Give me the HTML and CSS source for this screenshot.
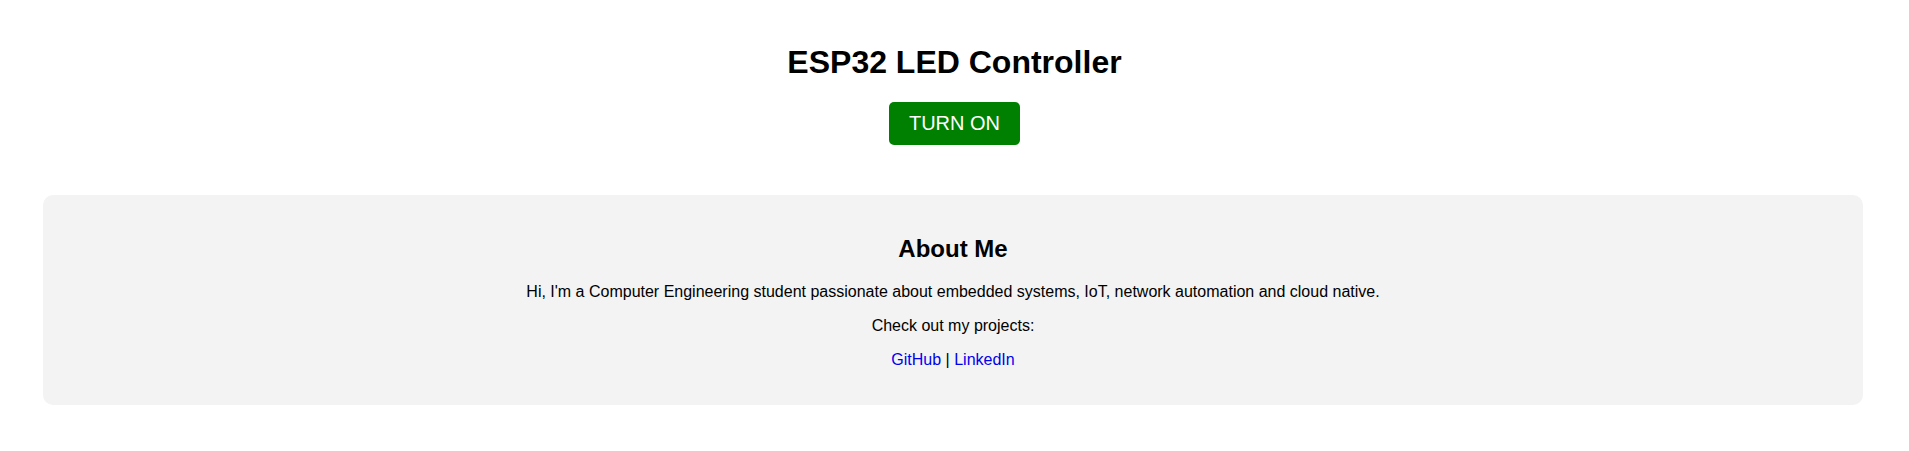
FILE: index.html
```html
<!DOCTYPE html>
<html lang="en">
<head>
<meta charset="utf-8">
<title>ESP32 LED Controller</title>
<link rel="stylesheet" href="styles.css">
</head>
<body>
  <h1 class="title">ESP32 LED Controller</h1>
  <div class="controls">
    <button class="toggle">TURN ON</button>
  </div>
  <section class="about">
    <h2 class="about-title">About Me</h2>
    <p>Hi, I'm a Computer Engineering student passionate about embedded systems, IoT, network automation and cloud native.</p>
    <p>Check out my projects:</p>
    <p><a class="link" href="#">GitHub</a> | <a class="link" href="#">LinkedIn</a></p>
  </section>
</body>
</html>
```
FILE: styles.css
```css
html, body {
  background: #ffffff;
}
body {
  margin: 0;
  padding: 23px 20px 20px;
  font-family: "Liberation Sans", Arial, sans-serif;
  font-size: 16px;
  color: #000000;
  text-align: center;
}
.title {
  font-size: 32px;
  font-weight: bold;
  margin: 21.44px 0 20.44px;
}
.controls {
  line-height: 18px;
}
.toggle {
  font-family: "Liberation Sans", Arial, sans-serif;
  font-size: 20px;
  line-height: 23px;
  padding: 10px 20px;
  border: none;
  border-radius: 5px;
  background: #008000;
  color: #ffffff;
  cursor: pointer;
  vertical-align: top;
}
.about {
  margin: 50px 26px 0 23px;
  padding: 20px;
  background: #f3f3f3;
  border-radius: 10px;
}
.about-title {
  font-size: 24px;
  margin: 19.92px 0;
}
.about p {
  margin: 16px 0;
}
.link {
  color: #0000ee;
  text-decoration: none;
}
```
